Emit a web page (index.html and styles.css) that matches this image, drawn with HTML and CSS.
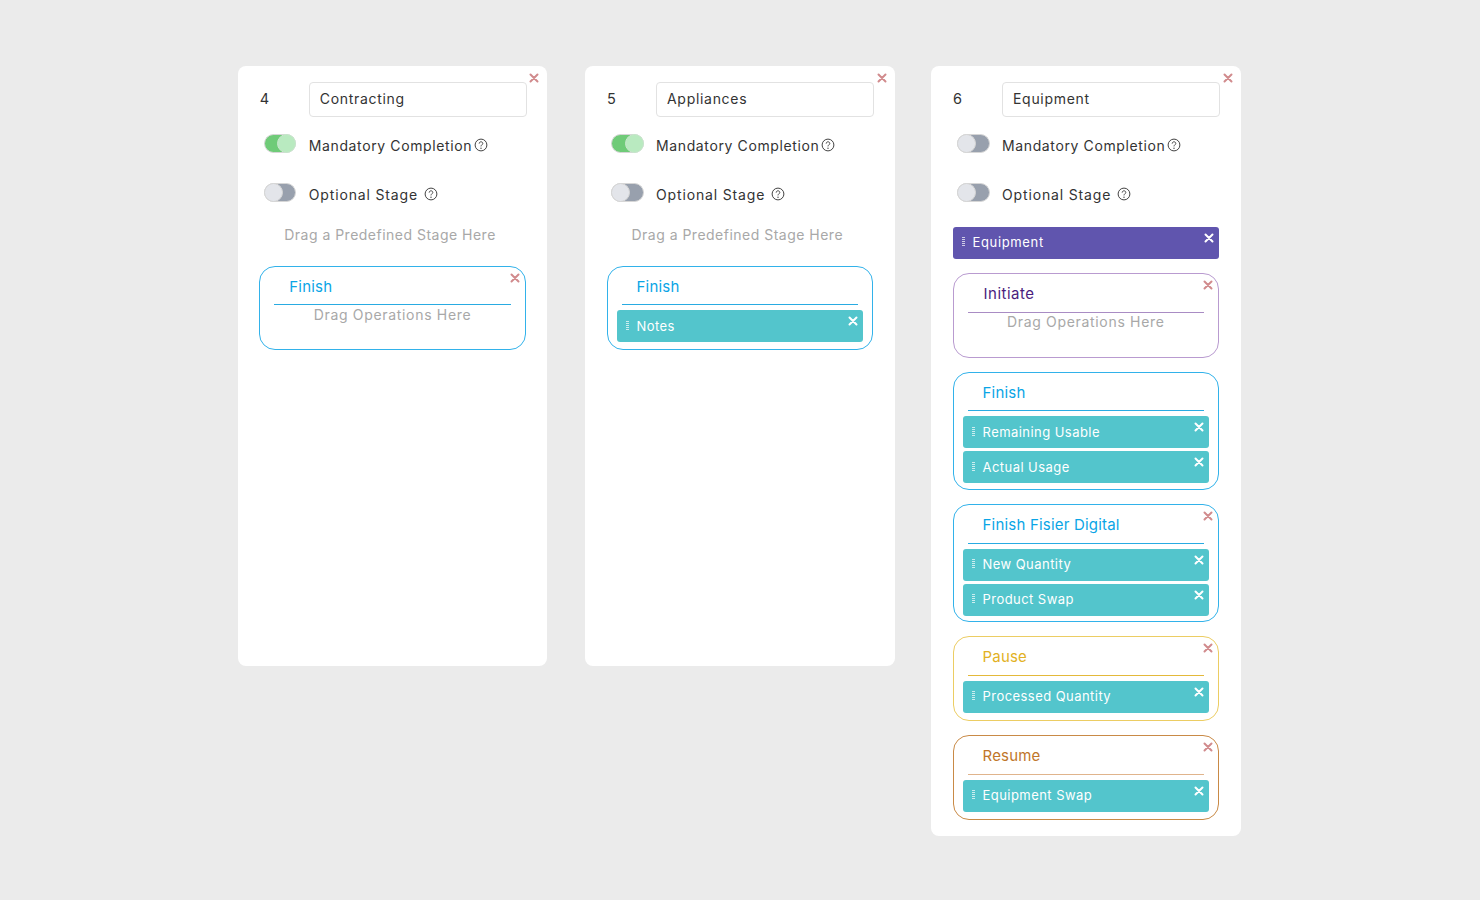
FILE: index.html
```html
<!DOCTYPE html>
<html lang="en">
<head>
<meta charset="utf-8">
<title>Stages</title>
<link rel="stylesheet" href="styles.css">
</head>
<body>
<svg class="defs" width="0" height="0" aria-hidden="true">
  <symbol id="x" viewBox="0 0 10 10"><path d="M1.5 1.5l7 7M8.5 1.5l-7 7" fill="none" stroke="currentColor" stroke-width="2" stroke-linecap="round"/></symbol>
  <symbol id="help" viewBox="0 0 14 14"><circle cx="7" cy="7" r="5.9" fill="none" stroke="currentColor" stroke-width="1"/><path d="M5.2 5.6c0-1.1.8-1.8 1.8-1.8s1.8.7 1.8 1.6c0 1.4-1.8 1.5-1.8 3" fill="none" stroke="currentColor" stroke-width="1"/><circle cx="7" cy="10.2" r=".7" fill="currentColor"/></symbol>
  <symbol id="grip" viewBox="0 0 3 10"><path d="M0 .5h3M0 2.5h3M0 4.5h3M0 6.5h3M0 8.5h3" stroke="currentColor" stroke-width="1"/></symbol>
</svg>
<main class="board">

  <section class="panel">
    <svg class="close close-panel"><use href="#x"/></svg>
    <div class="name-row"><span class="num">4</span><input class="name" value="Contracting"></div>
    <div class="opt opt-first"><span class="switch on"><i></i></span><span class="opt-label">Mandatory Completion</span><svg class="help"><use href="#help"/></svg></div>
    <div class="opt"><span class="switch"><i></i></span><span class="opt-label label-opt">Optional Stage</span><svg class="help help-gap"><use href="#help"/></svg></div>
    <p class="hint hint-stage">Drag a Predefined Stage Here</p>
    <div class="stage blue">
      <svg class="close close-stage"><use href="#x"/></svg>
      <h3 class="stage-title">Finish</h3>
      <p class="hint hint-op">Drag Operations Here</p>
    </div>
  </section>

  <section class="panel">
    <svg class="close close-panel"><use href="#x"/></svg>
    <div class="name-row"><span class="num">5</span><input class="name" value="Appliances"></div>
    <div class="opt opt-first"><span class="switch on"><i></i></span><span class="opt-label">Mandatory Completion</span><svg class="help"><use href="#help"/></svg></div>
    <div class="opt"><span class="switch"><i></i></span><span class="opt-label label-opt">Optional Stage</span><svg class="help help-gap"><use href="#help"/></svg></div>
    <p class="hint hint-stage">Drag a Predefined Stage Here</p>
    <div class="stage blue">
      <h3 class="stage-title">Finish</h3>
      <div class="op"><svg class="grip"><use href="#grip"/></svg>Notes<svg class="close close-op"><use href="#x"/></svg></div>
    </div>
  </section>

  <section class="panel panel-tall">
    <svg class="close close-panel"><use href="#x"/></svg>
    <div class="name-row"><span class="num">6</span><input class="name" value="Equipment"></div>
    <div class="opt opt-first"><span class="switch"><i></i></span><span class="opt-label">Mandatory Completion</span><svg class="help"><use href="#help"/></svg></div>
    <div class="opt"><span class="switch"><i></i></span><span class="opt-label label-opt">Optional Stage</span><svg class="help help-gap"><use href="#help"/></svg></div>
    <div class="predefined"><svg class="grip"><use href="#grip"/></svg>Equipment<svg class="close close-op"><use href="#x"/></svg></div>

    <div class="stage purple">
      <svg class="close close-stage"><use href="#x"/></svg>
      <h3 class="stage-title">Initiate</h3>
      <p class="hint hint-op">Drag Operations Here</p>
    </div>
    <div class="stage blue">
      <h3 class="stage-title">Finish</h3>
      <div class="op"><svg class="grip"><use href="#grip"/></svg>Remaining Usable<svg class="close close-op"><use href="#x"/></svg></div>
      <div class="op"><svg class="grip"><use href="#grip"/></svg>Actual Usage<svg class="close close-op"><use href="#x"/></svg></div>
    </div>
    <div class="stage blue">
      <svg class="close close-stage"><use href="#x"/></svg>
      <h3 class="stage-title">Finish Fisier Digital</h3>
      <div class="op"><svg class="grip"><use href="#grip"/></svg>New Quantity<svg class="close close-op"><use href="#x"/></svg></div>
      <div class="op"><svg class="grip"><use href="#grip"/></svg>Product Swap<svg class="close close-op"><use href="#x"/></svg></div>
    </div>
    <div class="stage yellow">
      <svg class="close close-stage"><use href="#x"/></svg>
      <h3 class="stage-title">Pause</h3>
      <div class="op"><svg class="grip"><use href="#grip"/></svg>Processed Quantity<svg class="close close-op"><use href="#x"/></svg></div>
    </div>
    <div class="stage orange">
      <svg class="close close-stage"><use href="#x"/></svg>
      <h3 class="stage-title">Resume</h3>
      <div class="op"><svg class="grip"><use href="#grip"/></svg>Equipment Swap<svg class="close close-op"><use href="#x"/></svg></div>
    </div>
  </section>

</main>
</body>
</html>
```

FILE: styles.css
```css
* { box-sizing: border-box; }
html, body { margin: 0; height: 100%; }
body {
  background: #ebebeb;
  color: #333;
  font-family: Inter, "Noto Sans", sans-serif;
  font-size: 14px;
  overflow: hidden;
}
.defs { display: block; height: 0; }
.board {
  display: flex;
  align-items: flex-start;
  gap: 37.75px;
  padding: 66px 0 0 237.75px;
}
.panel {
  position: relative;
  width: 309.5px;
  height: 600px;
  padding: 16px 20px 16px 22px;
  background: #fff;
  border-radius: 8px;
}
.panel-tall { height: 770px; margin-left: -1.25px; }
.close { position: absolute; display: block; }
.close-panel { top: 7px; right: 8px; width: 10px; height: 10px; color: #d18b8d; }
.close-stage { top: 6px; right: 5px; width: 10px; height: 10px; color: #d18b8d; }
.close-op { top: 6px; right: 5px; width: 10px; height: 10px; color: #fff; }

.name-row { display: flex; align-items: center; height: 35px; }
.num { width: 49px; padding-bottom: 2px; font-size: 14.5px; }
.name {
  width: 218px;
  height: 35px;
  padding: 0 10px 2px;
  border: 1px solid #e2e2e2;
  border-radius: 4px;
  color: #333;
  font: 14px Inter, "Noto Sans", sans-serif;
  letter-spacing: .7px;
  outline: none;
}
.opt { display: flex; align-items: center; height: 20px; margin-top: 29px; }
.opt-first { margin-top: 18px; }
.switch {
  position: relative;
  display: block;
  flex: none;
  width: 32.5px;
  height: 19px;
  margin: -4px 12.5px 0 4px;
  border-radius: 10px;
  background: #98a0ad;
  border: 1px solid #d6d6d6;
}
.switch i {
  position: absolute;
  left: -1px;
  top: -1px;
  width: 19px;
  height: 19px;
  border-radius: 50%;
  background: #e3e5ea;
  border: 1px solid #d6d6d6;
}
.switch.on { background: #6fcb78; }
.switch.on i { left: auto; right: -1px; background: #b9eac0; border-color: #c9e6cd; }
.opt-label { letter-spacing: .62px; }
.label-opt { letter-spacing: .85px; }
.help { display: block; width: 14px; height: 14px; margin-left: 2px; color: #444; }
.help-gap { margin-left: 6px; }
.hint { margin: 0; color: #a8a8a8; text-align: center; }
.hint-stage { margin: 22px 7px 0 0; line-height: 17px; letter-spacing: .49px; }
.hint-op { margin: -4.5px 0 0; line-height: 17px; letter-spacing: .68px; }
.panel > .hint-stage + .stage { margin-top: 22.5px; margin-left: -.5px; }

.predefined {
  position: relative;
  display: flex;
  align-items: center;
  width: 266px;
  height: 32px;
  margin: 23px 0 14px -0.5px;
  padding: 0 0 2px 9px;
  border-radius: 3px;
  background: #6055ae;
  color: #fff;
  font-size: 13px;
  letter-spacing: .65px;
}
.panel-tall .stage { margin-left: -.5px; }
.stage {
  position: relative;
  width: 266.5px;
  min-height: 84.5px;
  margin-bottom: 14.25px;
  padding: 0 9px 5.5px;
  border: 1px solid;
  border-radius: 16px;
}
.stage-title {
  margin: 0 5px 5px;
  height: 38.5px;
  padding: 11px 0 0 15px;
  border-bottom: 1px solid;
  font-size: 15px;
  font-weight: 400;
  line-height: 18px;
  letter-spacing: .2px;
}
.purple .stage-title { padding-left: 16px; letter-spacing: .5px; }
.blue { border-color: #32b2ea; color: #0aa5e6; }
.purple { border-color: #b99bd0; color: #4b1d7e; }
.yellow { border-color: #eccd63; color: #e2b124; }
.orange { border-color: #c98a46; color: #c0762a; }
.blue .stage-title { border-color: #29abe2; }
.purple .stage-title { border-color: #a98cc4; }
.yellow .stage-title { border-color: #e4b93a; }
.orange .stage-title { border-color: #e0b48c; }

.op {
  position: relative;
  display: flex;
  align-items: center;
  height: 32px;
  margin-bottom: 3px;
  padding: 0 0 1px 9px;
  border-radius: 3px;
  background: #53c5cc;
  color: #fff;
  font-size: 13px;
  letter-spacing: .45px;
}
.op:last-child { margin-bottom: 0; }
.grip { display: block; flex: none; width: 3px; height: 10px; margin-right: 8px; color: #fff; opacity: .7; }
```
